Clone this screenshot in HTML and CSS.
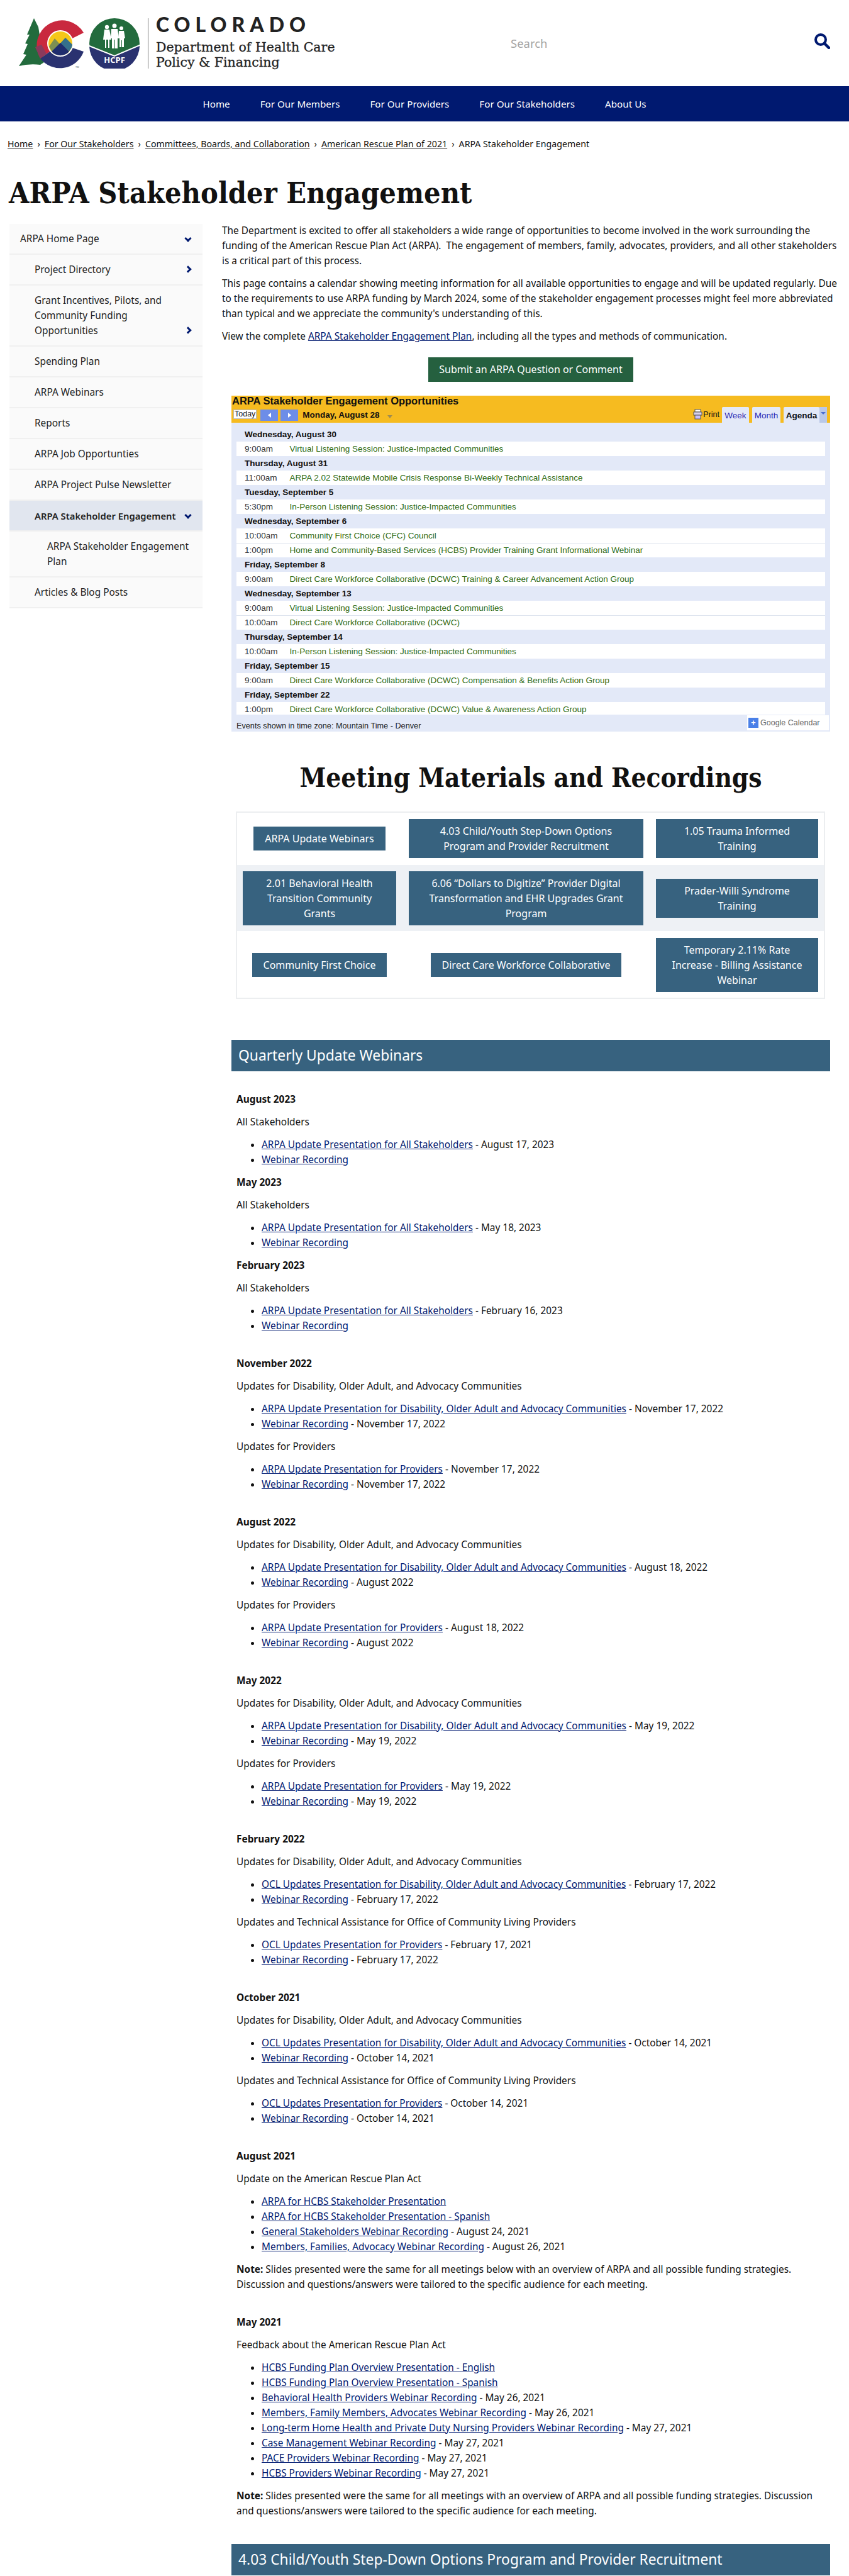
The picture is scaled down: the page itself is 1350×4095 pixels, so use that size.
FILE: index.html
```html
<!DOCTYPE html>
<html lang="en">
<head>
  <meta charset="UTF-8">
  <title>ARPA Stakeholder Engagement</title>
  <link rel="stylesheet" href="styles.css">
</head>
<body>

<header class="site-header">
  <a class="logo" href="#">
    <svg class="logo-marks" width="192" height="80" viewBox="0 0 192 80">
      <!-- tree -->
      <path d="M24 0 L31 14 L40 70 L34 74 Q16 72 0 76 L12 58 L7 57 L14 41 L10 40 L17 26 L13 26 Z" fill="#236b3d"/>
      <!-- colorado C -->
      <path d="M103 23 A40 40 0 0 0 34 64 L52 51 A20 20 0 0 1 85 32 Z" fill="#c9283e"/>
      <path d="M34 64 A40 40 0 0 0 103 53 L85 47 A20 20 0 0 1 52 51 Z" fill="#2a3270"/>
      <path d="M26 46 L34 64 L44 57 L36 42 Z" fill="#8a3a5c"/>
      <circle cx="66" cy="40" r="21" fill="#fff"/>
      <circle cx="66" cy="40" r="19" fill="#f5c71a"/>
      <path d="M48 45 L57 32 L65 41 L74 31 L85 42 A19 19 0 0 1 52 52 Z" fill="#7d8f52"/>
      <path d="M65 41 L74 31 L85 42 A19 19 0 0 1 80 52 Z" fill="#35708c"/>
      <path d="M52 53 L66 39 L80 53 A19 19 0 0 1 52 53 Z" fill="#1f2c6e"/>
      <text x="90" y="79" class="tm-text">TM</text>
      <!-- hcpf badge -->
      <circle cx="152" cy="40" r="40" fill="#236b3d"/>
      <path d="M112 44 L152 60 L192 43 A40 40 0 0 1 112 44 Z" fill="#2a3270"/>
      <path d="M112 44 L152 60 L192 43" fill="none" stroke="#fff" stroke-width="2"/>
      <g fill="#fff">
        <circle cx="140" cy="14" r="3.2"/>
        <path d="M136 18 h8 l3 16 h-3 v13 h-2 v-13 h-3 v13 h-2 v-13 h-3 z"/>
        <circle cx="152" cy="12" r="3.5"/>
        <path d="M147 17 h10 l2 15 h-2 v16 h-4 v-14 h-1 v14 h-4 v-16 h-2 z"/>
        <circle cx="163" cy="16" r="3"/>
        <path d="M159 20 h8 l2 12 h-2 v14 h-3 v-11 h-1 v11 h-3 v-14 h-2 z"/>
      </g>
      <text x="152" y="71" class="hcpf-text" text-anchor="middle">HCPF</text>
    </svg>
    <span class="logo-rule"></span>
    <span class="logo-words">
      <span class="logo-state">COLORADO</span>
      <span class="logo-dept">Department of Health Care<br>Policy &amp; Financing</span>
    </span>
  </a>
  <div class="search-text">Search</div>
  <svg class="search-icon" width="25" height="25" viewBox="0 0 25 25">
    <circle cx="10" cy="10" r="8" fill="none" stroke="#001970" stroke-width="4"/>
    <path d="M16 16 L23 23" stroke="#001970" stroke-width="4.5" stroke-linecap="round"/>
  </svg>
</header>

<nav class="main-nav">
  <a href="#">Home</a>
  <a href="#">For Our Members</a>
  <a href="#">For Our Providers</a>
  <a href="#">For Our Stakeholders</a>
  <a href="#">About Us</a>
</nav>

<div class="breadcrumb">
  <a href="#">Home</a><span class="sep">›</span><a href="#">For Our Stakeholders</a><span class="sep">›</span><a href="#">Committees, Boards, and Collaboration</a><span class="sep">›</span><a href="#">American Rescue Plan of 2021</a><span class="sep">›</span>ARPA Stakeholder Engagement
</div>

<h1 class="page-title">ARPA Stakeholder Engagement</h1>

<div class="layout">
  <aside class="side-menu">
    <a class="item" href="#">ARPA Home Page<span class="chev down"></span></a>
    <a class="item lvl2" href="#">Project Directory<span class="chev right"></span></a>
    <a class="item lvl2" href="#">Grant Incentives, Pilots, and Community Funding Opportunities<span class="chev right"></span></a>
    <a class="item lvl2" href="#">Spending Plan</a>
    <a class="item lvl2" href="#">ARPA Webinars</a>
    <a class="item lvl2" href="#">Reports</a>
    <a class="item lvl2" href="#">ARPA Job Opportunties</a>
    <a class="item lvl2" href="#">ARPA Project Pulse Newsletter</a>
    <a class="item lvl2 active" href="#">ARPA Stakeholder Engagement<span class="chev down"></span></a>
    <a class="item lvl3" href="#">ARPA Stakeholder Engagement Plan</a>
    <a class="item lvl2" href="#">Articles &amp; Blog Posts</a>
  </aside>

  <main class="content">
    <p>The Department is excited to offer all stakeholders a wide range of opportunities to become involved in the work surrounding the funding of the American Rescue Plan Act (ARPA).&nbsp; The engagement of members, family, advocates, providers, and all other stakeholders is a critical part of this process.</p>
    <p>This page contains a calendar showing meeting information for all available opportunities to engage and will be updated regularly. Due to the requirements to use ARPA funding by March 2024, some of the stakeholder engagement processes might feel more abbreviated than typical and we appreciate the community's understanding of this.</p>
    <p>View the complete <a href="#">ARPA Stakeholder Engagement Plan</a>, including all the types and methods of communication.</p>

    <div class="submit-wrap"><a class="btn-green" href="#">Submit an ARPA Question or Comment</a></div>

    <div class="calendar">
      <div class="cal-top">
        <div class="cal-title">ARPA Stakeholder Engagement Opportunities</div>
        <div class="cal-tools">
          <span class="cal-today">Today</span>
          <span class="cal-arrow"><i class="tri-left"></i></span>
          <span class="cal-arrow"><i class="tri-right"></i></span>
          <span class="cal-date">Monday, August 28</span>
          <span class="cal-caret"></span>
          <span class="cal-spacer"></span>
          <svg class="cal-print" width="15" height="17" viewBox="0 0 15 17">
            <rect x="3" y="1" width="9" height="4" fill="#fff" stroke="#555"/>
            <rect x="1" y="5" width="13" height="5" fill="#d9d2ef" stroke="#555"/>
            <rect x="3" y="10" width="9" height="6" fill="#c9c0ff" stroke="#555"/>
          </svg>
          <span class="cal-printlabel">Print</span>
          <span class="cal-tab tab-week">Week</span>
          <span class="cal-tab tab-month">Month</span>
          <span class="cal-tab tab-agenda on">Agenda</span>
          <span class="cal-tabmenu"><i></i></span>
        </div>
      </div>
      <div class="cal-body">
        <div class="cal-day">Wednesday, August 30</div>
        <div class="cal-ev"><span>9:00am</span><b>Virtual Listening Session: Justice-Impacted Communities</b></div>
        <div class="cal-day">Thursday, August 31</div>
        <div class="cal-ev"><span>11:00am</span><b>ARPA 2.02 Statewide Mobile Crisis Response Bi-Weekly Technical Assistance</b></div>
        <div class="cal-day">Tuesday, September 5</div>
        <div class="cal-ev"><span>5:30pm</span><b>In-Person Listening Session: Justice-Impacted Communities</b></div>
        <div class="cal-day">Wednesday, September 6</div>
        <div class="cal-ev line"><span>10:00am</span><b>Community First Choice (CFC) Council</b></div>
        <div class="cal-ev"><span>1:00pm</span><b>Home and Community-Based Services (HCBS) Provider Training Grant Informational Webinar</b></div>
        <div class="cal-day">Friday, September 8</div>
        <div class="cal-ev"><span>9:00am</span><b>Direct Care Workforce Collaborative (DCWC) Training &amp; Career Advancement Action Group</b></div>
        <div class="cal-day">Wednesday, September 13</div>
        <div class="cal-ev line"><span>9:00am</span><b>Virtual Listening Session: Justice-Impacted Communities</b></div>
        <div class="cal-ev"><span>10:00am</span><b>Direct Care Workforce Collaborative (DCWC)</b></div>
        <div class="cal-day">Thursday, September 14</div>
        <div class="cal-ev"><span>10:00am</span><b>In-Person Listening Session: Justice-Impacted Communities</b></div>
        <div class="cal-day">Friday, September 15</div>
        <div class="cal-ev"><span>9:00am</span><b>Direct Care Workforce Collaborative (DCWC) Compensation &amp; Benefits Action Group</b></div>
        <div class="cal-day">Friday, September 22</div>
        <div class="cal-ev"><span>1:00pm</span><b>Direct Care Workforce Collaborative (DCWC) Value &amp; Awareness Action Group</b></div>
      </div>
      <div class="cal-foot">
        <span>Events shown in time zone: Mountain Time - Denver</span>
        <span class="gcal"><i>+</i>Google Calendar</span>
      </div>
    </div>

    <h2 class="center-title">Meeting Materials and Recordings</h2>

    <table class="btn-table">
      <tr class="r1">
        <td class="c1"><a class="btn-blue" href="#">ARPA Update Webinars</a></td>
        <td class="c2"><a class="btn-blue fill" href="#">4.03 Child/Youth Step-Down Options<br>Program and Provider Recruitment</a></td>
        <td class="c3"><a class="btn-blue fill" href="#">1.05 Trauma Informed<br>Training</a></td>
      </tr>
      <tr class="r2">
        <td class="c1"><a class="btn-blue fill" href="#">2.01 Behavioral Health<br>Transition Community<br>Grants</a></td>
        <td class="c2"><a class="btn-blue fill" href="#">6.06 “Dollars to Digitize” Provider Digital<br>Transformation and EHR Upgrades Grant<br>Program</a></td>
        <td class="c3"><a class="btn-blue fill" href="#">Prader-Willi Syndrome<br>Training</a></td>
      </tr>
      <tr class="r3">
        <td class="c1"><a class="btn-blue" href="#">Community First Choice</a></td>
        <td class="c2"><a class="btn-blue" href="#">Direct Care Workforce Collaborative</a></td>
        <td class="c3"><a class="btn-blue fill" href="#">Temporary 2.11% Rate<br>Increase - Billing Assistance<br>Webinar</a></td>
      </tr>
    </table>

    <h3 class="band">Quarterly Update Webinars</h3>

    <div class="webinars">
      <p><strong>August 2023</strong></p>
      <p>All Stakeholders</p>
      <ul>
        <li><a href="#">ARPA Update Presentation for All Stakeholders</a> - August 17, 2023</li>
        <li><a href="#">Webinar Recording</a></li>
      </ul>
      <p><strong>May 2023</strong></p>
      <p>All Stakeholders</p>
      <ul>
        <li><a href="#">ARPA Update Presentation for All Stakeholders</a> - May 18, 2023</li>
        <li><a href="#">Webinar Recording</a></li>
      </ul>
      <p><strong>February 2023</strong></p>
      <p>All Stakeholders</p>
      <ul>
        <li><a href="#">ARPA Update Presentation for All Stakeholders</a> - February 16, 2023</li>
        <li><a href="#">Webinar Recording</a></li>
      </ul>

      <p class="gap"><strong>November 2022</strong></p>
      <p>Updates for Disability, Older Adult, and Advocacy Communities</p>
      <ul>
        <li><a href="#">ARPA Update Presentation for Disability, Older Adult and Advocacy Communities</a> - November 17, 2022</li>
        <li><a href="#">Webinar Recording</a> - November 17, 2022</li>
      </ul>
      <p>Updates for Providers</p>
      <ul>
        <li><a href="#">ARPA Update Presentation for Providers</a> - November 17, 2022</li>
        <li><a href="#">Webinar Recording</a> - November 17, 2022</li>
      </ul>

      <p class="gap"><strong>August 2022</strong></p>
      <p>Updates for Disability, Older Adult, and Advocacy Communities</p>
      <ul>
        <li><a href="#">ARPA Update Presentation for Disability, Older Adult and Advocacy Communities</a> - August 18, 2022</li>
        <li><a href="#">Webinar Recording</a> - August 2022</li>
      </ul>
      <p>Updates for Providers</p>
      <ul>
        <li><a href="#">ARPA Update Presentation for Providers</a> - August 18, 2022</li>
        <li><a href="#">Webinar Recording</a> - August 2022</li>
      </ul>

      <p class="gap"><strong>May 2022</strong></p>
      <p>Updates for Disability, Older Adult, and Advocacy Communities</p>
      <ul>
        <li><a href="#">ARPA Update Presentation for Disability, Older Adult and Advocacy Communities</a> - May 19, 2022</li>
        <li><a href="#">Webinar Recording</a> - May 19, 2022</li>
      </ul>
      <p>Updates for Providers</p>
      <ul>
        <li><a href="#">ARPA Update Presentation for Providers</a> - May 19, 2022</li>
        <li><a href="#">Webinar Recording</a> - May 19, 2022</li>
      </ul>

      <p class="gap"><strong>February 2022</strong></p>
      <p>Updates for Disability, Older Adult, and Advocacy Communities</p>
      <ul>
        <li><a href="#">OCL Updates Presentation for Disability, Older Adult and Advocacy Communities</a> - February 17, 2022</li>
        <li><a href="#">Webinar Recording</a> - February 17, 2022</li>
      </ul>
      <p>Updates and Technical Assistance for Office of Community Living Providers</p>
      <ul>
        <li><a href="#">OCL Updates Presentation for Providers</a> - February 17, 2021</li>
        <li><a href="#">Webinar Recording</a> - February 17, 2022</li>
      </ul>

      <p class="gap"><strong>October 2021</strong></p>
      <p>Updates for Disability, Older Adult, and Advocacy Communities</p>
      <ul>
        <li><a href="#">OCL Updates Presentation for Disability, Older Adult and Advocacy Communities</a> - October 14, 2021</li>
        <li><a href="#">Webinar Recording</a> - October 14, 2021</li>
      </ul>
      <p>Updates and Technical Assistance for Office of Community Living Providers</p>
      <ul>
        <li><a href="#">OCL Updates Presentation for Providers</a> - October 14, 2021</li>
        <li><a href="#">Webinar Recording</a> - October 14, 2021</li>
      </ul>

      <p class="gap"><strong>August 2021</strong></p>
      <p>Update on the American Rescue Plan Act</p>
      <ul>
        <li><a href="#">ARPA for HCBS Stakeholder Presentation</a></li>
        <li><a href="#">ARPA for HCBS Stakeholder Presentation - Spanish</a></li>
        <li><a href="#">General Stakeholders Webinar Recording</a> - August 24, 2021</li>
        <li><a href="#">Members, Families, Advocacy Webinar Recording</a> - August 26, 2021</li>
      </ul>
      <p class="note"><strong>Note:</strong> Slides presented were the same for all meetings below with an overview of ARPA and all possible funding strategies. Discussion and questions/answers were tailored to the specific audience for each meeting.</p>

      <p class="gap"><strong>May 2021</strong></p>
      <p>Feedback about the American Rescue Plan Act</p>
      <ul>
        <li><a href="#">HCBS Funding Plan Overview Presentation - English</a></li>
        <li><a href="#">HCBS Funding Plan Overview Presentation - Spanish</a></li>
        <li><a href="#">Behavioral Health Providers Webinar Recording</a> - May 26, 2021</li>
        <li><a href="#">Members, Family Members, Advocates Webinar Recording</a> - May 26, 2021</li>
        <li><a href="#">Long-term Home Health and Private Duty Nursing Providers Webinar Recording</a> - May 27, 2021</li>
        <li><a href="#">Case Management Webinar Recording</a> - May 27, 2021</li>
        <li><a href="#">PACE Providers Webinar Recording</a> - May 27, 2021</li>
        <li><a href="#">HCBS Providers Webinar Recording</a> - May 27, 2021</li>
      </ul>
      <p class="note"><strong>Note:</strong> Slides presented were the same for all meetings with an overview of ARPA and all possible funding strategies. Discussion and questions/answers were tailored to the specific audience for each meeting.</p>
    </div>

    <h3 class="band">4.03 Child/Youth Step-Down Options Program and Provider Recruitment</h3>
  </main>
</div>

</body>
</html>
```

FILE: styles.css
```css
html, body {
  margin: 0;
  padding: 0;
  background-color: #fff;
  color: #111;
  font-family: "Noto Sans", sans-serif;
  font-size: 15.4px;
}

a {
  color: #001970;
}

/* header */
.site-header {
  display: flex;
  align-items: center;
  height: 137px;
  padding: 0 30px;
  box-sizing: border-box;
}

.logo {
  display: flex;
  align-items: center;
  width: 782px;
  color: #222;
  text-decoration: none;
}

.logo-marks {
  margin-right: 13px;
}

.hcpf-text {
  font-family: "Open Sans", sans-serif;
  font-size: 13px;
  font-weight: 700;
  fill: #fff;
}

.tm-text {
  font-family: "Open Sans", sans-serif;
  font-size: 4px;
  fill: #555;
}

.logo-rule {
  width: 1px;
  height: 80px;
  background-color: #777;
  margin-right: 12px;
}

.logo-words {
  display: flex;
  flex-direction: column;
}

.logo-state {
  font-family: "Lato", sans-serif;
  font-size: 32px;
  font-weight: 900;
  letter-spacing: 8px;
  line-height: 26px;
  margin-bottom: 11px;
}

.logo-dept {
  font-family: "DejaVu Serif", serif;
  font-size: 20.5px;
  line-height: 24px;
  -webkit-text-stroke: 0.3px #222;
}

.search-text {
  flex: 1;
  color: #a5a5a5;
  font-size: 18.5px;
}

.search-icon {
  margin-bottom: 6px;
}

.main-nav {
  display: flex;
  justify-content: center;
  gap: 48px;
  height: 56px;
  line-height: 56px;
  background-color: #001970;
}

.main-nav a {
  color: #fff;
  text-decoration: none;
  font-size: 15.2px;
}

.breadcrumb {
  padding: 24px 12px 0;
  font-size: 14.2px;
  line-height: 24px;
}

.breadcrumb a {
  color: #111;
}

.breadcrumb .sep {
  margin: 0 7px;
}

.page-title {
  font-family: "DejaVu Serif", serif;
  font-stretch: condensed;
  font-size: 46.5px;
  font-weight: 700;
  margin: 38px 0 0 14px;
  line-height: 56px;
  color: #111;
}

.layout {
  display: flex;
  align-items: flex-start;
  padding: 0 15px;
  margin-top: 20px;
}

/* side menu */
.side-menu {
  flex: 0 0 307px;
  margin-right: 31px;
  margin-top: 1px;
  color: #222;
}

.item {
  display: block;
  position: relative;
  padding: 12px 44px 11px 17px;
  line-height: 24px;
  color: #222;
  text-decoration: none;
  background-color: #fafafa;
  border-bottom: 2px solid #f0f0f0;
}

.lvl2 {
  padding-left: 40px;
}

.lvl3 {
  padding-left: 60px;
  padding-right: 20px;
}

.item.active {
  background-color: #e1e6ef;
  font-size: 14.8px;
  font-weight: 600;
  padding-right: 30px;
  white-space: nowrap;
}

.chev {
  position: absolute;
  right: 19px;
  bottom: 20px;
  width: 5px;
  height: 5px;
  border-right: 3px solid #001970;
  border-bottom: 3px solid #001970;
}

.chev.down {
  transform: rotate(45deg);
}

.chev.right {
  transform: rotate(-45deg);
}

/* main column */
.content {
  flex: 1;
  min-width: 0;
}

.content > p {
  margin: 0 0 12px;
  line-height: 24px;
}

.submit-wrap {
  text-align: center;
  padding-top: 9px;
}

.btn-green {
  display: inline-block;
  background-color: #25603f;
  color: #fff;
  font-size: 16px;
  text-decoration: none;
  padding: 0 17px;
  line-height: 39px;
  vertical-align: top;
}

/* calendar */
.calendar {
  margin: 22px 0 0 15px;
  font-family: "Liberation Sans", sans-serif;
  background-color: #e3e9f8;
  width: 952px;
}

.cal-top {
  background-color: #f6bb20;
  height: 43px;
  overflow: hidden;
}

.cal-title {
  font-size: 16.5px;
  font-weight: 700;
  line-height: 17px;
  color: #111;
  padding-left: 1px;
}

.cal-tools {
  display: flex;
  align-items: flex-end;
  height: 26px;
  font-size: 12.5px;
  padding-left: 3px;
}

.cal-today {
  background-color: #fff;
  border: 1px solid #bbb;
  line-height: 13px;
  padding: 0 1px;
  margin: 0 6px 6px 0;
  color: #222;
}

.cal-arrow {
  display: flex;
  align-items: center;
  justify-content: center;
  background-color: #6d8de8;
  width: 28px;
  height: 18px;
  margin: 0 4px 3px 0;
}

.tri-left, .tri-right {
  border: 4px solid transparent;
}

.tri-left {
  border-right: 5px solid #fff;
  margin-right: 4px;
}

.tri-right {
  border-left: 5px solid #fff;
  margin-left: 4px;
}

.cal-date {
  font-size: 13.5px;
  font-weight: 700;
  line-height: 18px;
  margin: 0 12px 3px 3px;
}

.cal-caret {
  border: 4px solid transparent;
  border-top: 5px solid #a08c50;
  margin-bottom: 3px;
}

.cal-spacer {
  flex: 1;
}

.cal-print {
  margin-bottom: 5px;
}

.cal-printlabel {
  line-height: 18px;
  margin: 0 0 4px 1px;
}

.cal-tab {
  background-color: #e3e9f8;
  color: #2a1fb0;
  font-size: 13.5px;
  text-align: center;
  height: 25px;
  line-height: 27px;
  margin-left: 5px;
  border-radius: 2px 2px 0 0;
}

.tab-week { width: 43px; margin-left: 4px; }
.tab-month { width: 45px; }
.tab-agenda { width: 57px; }

.cal-tab.on {
  color: #111;
  font-weight: 700;
}

.cal-tabmenu {
  display: flex;
  justify-content: center;
  padding-top: 8px;
  box-sizing: border-box;
  width: 12px;
  height: 25px;
  background-color: #b9c8e8;
  margin-right: 5px;
}

.cal-tabmenu i {
  border: 4px solid transparent;
  border-top: 4px solid #4a6ed0;
  height: 0;
}

.cal-body {
  margin: 0 8px;
  height: 464px;
  padding-top: 7px;
  box-sizing: border-box;
  overflow: hidden;
}

.cal-day {
  font-size: 13.5px;
  font-weight: 700;
  line-height: 23px;
  padding-left: 13px;
  color: #111;
}

.cal-ev {
  display: flex;
  background-color: #fff;
  font-size: 13.5px;
  line-height: 23px;
  padding-left: 13px;
  color: #333;
}

.cal-ev.line {
  box-shadow: 0 1px 0 #dde3ee;
  position: relative;
}

.cal-ev span {
  width: 71.5px;
}

.cal-ev b {
  font-weight: 400;
  color: #2f6b12;
}

.cal-foot {
  display: flex;
  justify-content: space-between;
  align-items: flex-end;
  height: 27px;
  padding: 0 2px 0 8px;
  box-sizing: border-box;
  font-size: 12.7px;
  line-height: 18px;
  color: #222;
}

.gcal {
  width: 130px;
  box-sizing: border-box;
  background-color: #fff;
  font-size: 12.5px;
  line-height: 24px;
  color: #666;
  margin-bottom: 2px;
}

.gcal i {
  display: inline-block;
  width: 16px;
  line-height: 16px;
  background-color: #4a80e8;
  color: #fff;
  font-style: normal;
  font-weight: 700;
  text-align: center;
  margin: 0 3px 0 2px;
}

/* button grid */
.center-title {
  font-family: "DejaVu Serif", serif;
  font-stretch: condensed;
  font-size: 42px;
  font-weight: 700;
  text-align: center;
  line-height: 56px;
  margin: 46px 0 26px;
  color: #111;
}

.btn-table {
  width: 935px;
  margin: 0 0 0 23px;
  table-layout: fixed;
  border-collapse: collapse;
  outline: 2px solid #eceef0;
  outline-offset: -1px;
}

.btn-table td {
  box-sizing: border-box;
  padding: 0 10px;
  text-align: center;
  vertical-align: middle;
}

.r1 td { height: 84px; }
.r3 td { height: 107px; }

.r2 td {
  height: 105px;
  background-color: #eef1f5;
}

.c1 { width: 264px; }
.c2 { width: 393px; }

.btn-blue {
  display: inline-block;
  background-color: #37627f;
  color: #fff;
  font-size: 16px;
  text-decoration: none;
  line-height: 24px;
  padding: 7px 18px;
  vertical-align: top;
}

.btn-blue.fill {
  display: block;
  padding-left: 8px;
  padding-right: 8px;
}

/* webinar lists */
.band {
  margin: 66px 0 0 15px;
  width: 952px;
  background-color: #37627f;
  color: #fff;
  font-size: 22.8px;
  font-weight: 400;
  line-height: 50px;
  padding-left: 11px;
  box-sizing: border-box;
}

.webinars {
  margin-left: 23px;
  padding-top: 33px;
}

.webinars p {
  margin: 0 0 12px;
  line-height: 24px;
}

.webinars .gap {
  margin-top: 36px;
}

.webinars .note {
  padding-right: 30px;
}

.webinars ul {
  margin: 0 0 12px;
  padding-left: 40px;
}

.webinars li {
  line-height: 24px;
}

.webinars + .band {
  margin-top: 40px;
}
```
